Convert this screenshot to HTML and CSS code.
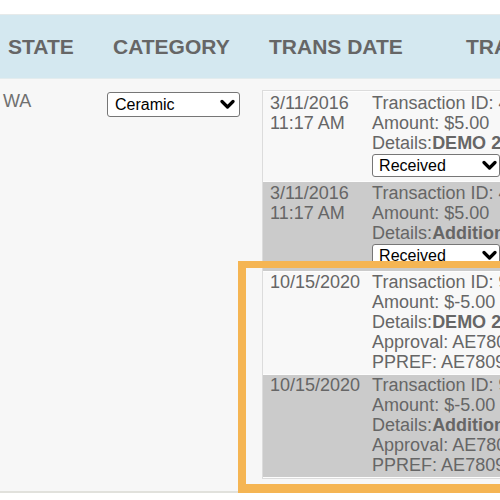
FILE: index.html
```html
<!DOCTYPE html>
<html>
<head>
<meta charset="utf-8">
<link rel="stylesheet" href="styles.css">
</head>
<body>
<div class="page">
  <div class="head">
    <div class="hcell h-state">STATE</div>
    <div class="hcell h-cat">CATEGORY</div>
    <div class="hcell h-date">TRANS DATE</div>
    <div class="hcell h-tr">TRANSACTIONS</div>
  </div>
  <div class="row">
    <div class="cell c-state">WA</div>
    <div class="cell c-cat">
      <div class="sel sel-cat"><span>Ceramic</span><svg class="chev" viewBox="0 0 15 11" width="15" height="11"><polyline points="2,2.5 7.5,8 13,2.5"/></svg></div>
    </div>
    <div class="cell c-trans">
      <table class="trans">
        <tr class="lt top">
          <td class="d">3/11/2016<br>11:17 AM</td>
          <td class="info">Transaction ID: 40012345<br>Amount: $5.00<br>Details:<b>DEMO 2016 Order</b><br>
            <div class="sel sel-st"><span>Received</span><svg class="chev" viewBox="0 0 15 11" width="15" height="11"><polyline points="2,2.5 7.5,8 13,2.5"/></svg></div></td>
        </tr>
        <tr class="dk top">
          <td class="d">3/11/2016<br>11:17 AM</td>
          <td class="info">Transaction ID: 40012346<br>Amount: $5.00<br>Details:<b>Additional Payment</b><br>
            <div class="sel sel-st"><span>Received</span><svg class="chev" viewBox="0 0 15 11" width="15" height="11"><polyline points="2,2.5 7.5,8 13,2.5"/></svg></div></td>
        </tr>
        <tr class="lt">
          <td class="d">10/15/2020</td>
          <td class="info">Transaction ID: 9876543<br>Amount: $-5.00<br>Details:<b>DEMO 2016 Order</b><br>Approval: AE7809F2<br>PPREF: AE7809F2C</td>
        </tr>
        <tr class="dk">
          <td class="d">10/15/2020</td>
          <td class="info">Transaction ID: 9876544<br>Amount: $-5.00<br>Details:<b>Additional Payment</b><br>Approval: AE7809F3<br>PPREF: AE7809F3C</td>
        </tr>
      </table>
    </div>
  </div>
  <div class="highlight"></div>
</div>
</body>
</html>
```
FILE: styles.css
```css
html, body {
  margin: 0;
  padding: 0;
  background: #fff;
  overflow: hidden;
}
body {
  font-family: "Liberation Sans", Arial, sans-serif;
  width: 500px;
  height: 500px;
}
.page {
  position: relative;
  padding-top: 14px;
  width: 500px;
  overflow: hidden;
}
.head {
  display: flex;
  height: 63px;
  align-items: center;
  background: #d4e8f0;
  border-top: 1px solid #e6eaea;
  border-bottom: 1px solid #e3ecee;
  white-space: nowrap;
}
.hcell {
  font-size: 21px;
  font-weight: bold;
  color: #666;
  flex: none;
  padding-top: 1px;
}
.h-state { width: 105px; padding-left: 8px; }
.h-cat { width: 156px; }
.h-date { width: 197px; }
.h-tr { width: 200px; }

.row {
  display: flex;
  align-items: flex-start;
  background: #f7f7f7;
  padding: 11px 0 12px;
  border-bottom: 2px solid #e1e1dc;
  white-space: nowrap;
}
.cell { flex: none; }
.c-state {
  width: 104px;
  padding-left: 3px;
  padding-top: 1px;
  font-size: 18px;
  line-height: 20px;
  color: #707070;
}
.c-cat {
  width: 155px;
  padding-top: 2px;
}
.c-trans { width: 320px; }

.sel {
  box-sizing: border-box;
  display: flex;
  align-items: center;
  justify-content: space-between;
  background: #fff;
  border: 1px solid #767676;
  border-radius: 3px;
  color: #000;
  font-size: 16px;
  line-height: 18px;
}
.sel-cat {
  width: 133px;
  height: 25px;
  padding: 0 4px 0 7px;
}
.sel-st {
  width: 128px;
  height: 23px;
  padding: 0 2px 0 6px;
  margin: 1px 0 2px;
}
.chev {
  fill: none;
  stroke: #000;
  stroke-width: 3.2;
  stroke-linecap: round;
  stroke-linejoin: round;
}

.trans {
  border-collapse: separate;
  border-spacing: 0 1px;
  border: 1px solid #dcdcdc;
  background: #fdfdfd;
  color: #666;
  font-size: 18px;
  line-height: 20px;
}
.trans td {
  vertical-align: top;
  padding: 0 6px 2px 6px;
}
.trans tr.top td { padding-top: 1px; }
.trans td.d {
  width: 90px;
  padding-left: 7px;
}
.lt { background: #f8f8f8; }
.dk { background: #cbcbcb; }
.info b { font-weight: bold; }

.highlight {
  position: absolute;
  left: 238px;
  top: 261px;
  width: 300px;
  height: 232px;
  box-sizing: border-box;
  border: 8px solid #f5b553;
  border-top-width: 7px;
  border-bottom-width: 9px;
}
```
